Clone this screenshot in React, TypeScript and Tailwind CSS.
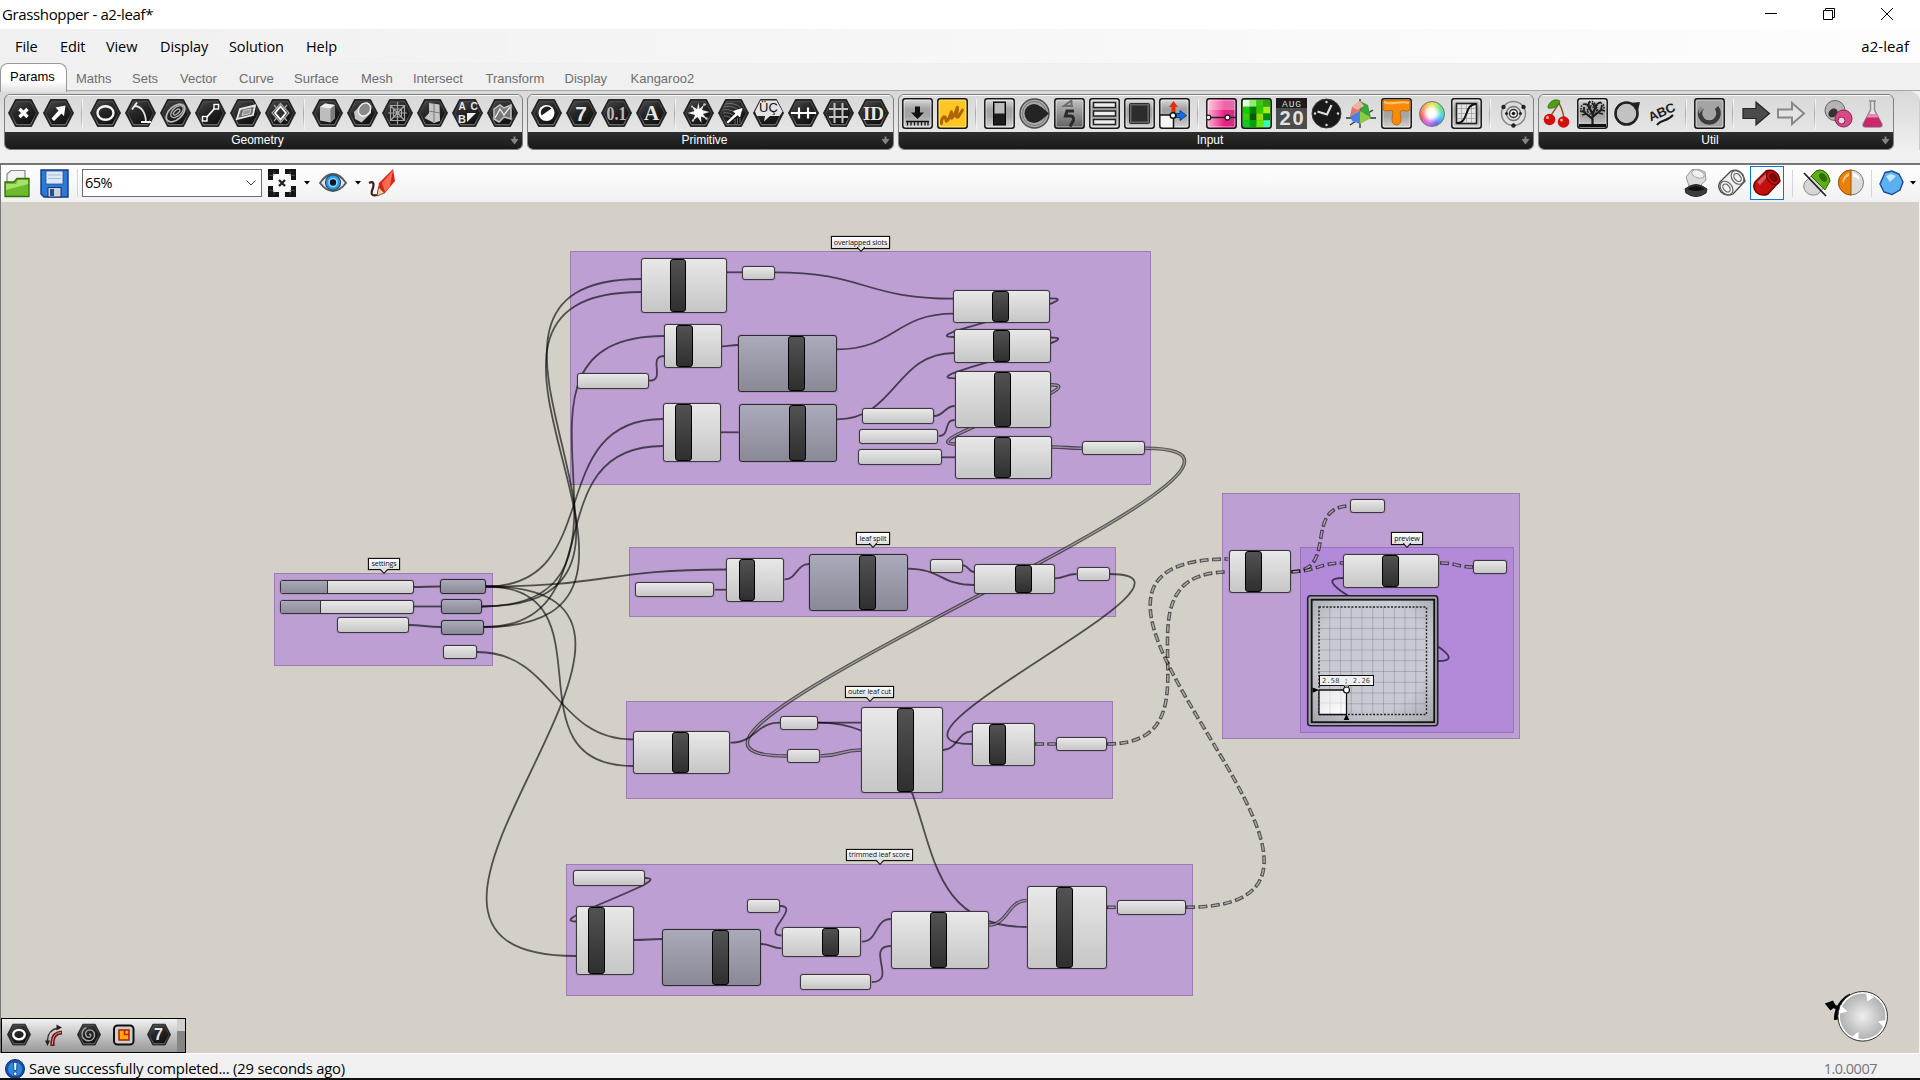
import React from "react";

/* ---------- shared icon frames ---------- */

function Hex({ children }: { children?: React.ReactNode }) {
  return (
    <svg viewBox="0 0 31 31" className="h-[31px] w-[31px] shrink-0">
      <polygon points="0.5,15 7.5,1.5 23.5,1.5 30.5,15 23.5,28.5 7.5,28.5" fill="#161616" stroke="#2c2c2c" strokeWidth="1" />
      <polygon points="2.5,15 8.5,3.2 22.5,3.2 28.5,15 22.5,26.8 8.5,26.8" fill="url(#hexFill)" stroke="url(#hexRim)" strokeWidth="1" />
      {children}
    </svg>
  );
}

function Tile({ fill = "url(#tileFill)", children }: { fill?: string; children?: React.ReactNode }) {
  return (
    <svg viewBox="0 0 31 31" className="h-[31px] w-[31px] shrink-0">
      <rect x="0.8" y="0.8" width="29.4" height="29.4" rx="2.5" fill={fill} stroke="#161616" strokeWidth="1.5" />
      <rect x="2.2" y="2.2" width="26.6" height="26.6" rx="1" fill="none" stroke="#fff" strokeOpacity="0.45" strokeWidth="1" />
      {children}
    </svg>
  );
}

function Bare({ children }: { children?: React.ReactNode }) {
  return (
    <svg viewBox="0 0 31 31" className="h-[31px] w-[31px] shrink-0">
      {children}
    </svg>
  );
}

function Glyph({ children, size = 20, serif = true, x = 15.5, y = 22 }: { children: string; size?: number; serif?: boolean; x?: number; y?: number }) {
  return (
    <text x={x} y={y} textAnchor="middle" fontSize={size} fontWeight="700" fill="#e6e6e6" fontFamily={serif ? '"Liberation Serif", serif' : '"Liberation Sans", sans-serif'}>
      {children}
    </text>
  );
}

const Sep = () => <div className="mt-px h-[30px] w-2 shrink-0 px-[3px]"><div className="h-full w-0.5 border-r border-white/70 bg-gradient-to-b from-transparent via-[#a8a8a8] to-transparent" /></div>;

function Defs() {
  return (
    <svg className="absolute h-0 w-0">
      <defs>
        <linearGradient id="hexFill" x1="0" y1="0" x2="0.6" y2="1">
          <stop offset="0" stopColor="#4c4c4c" /><stop offset="0.5" stopColor="#262626" /><stop offset="1" stopColor="#121212" />
        </linearGradient>
        <linearGradient id="hexRim" x1="0" y1="0" x2="0" y2="1">
          <stop offset="0" stopColor="#555" /><stop offset="0.6" stopColor="#444" /><stop offset="1" stopColor="#8a8a8a" />
        </linearGradient>
        <linearGradient id="tileFill" x1="0" y1="0" x2="0" y2="1">
          <stop offset="0" stopColor="#dedede" /><stop offset="0.35" stopColor="#a2a2a2" /><stop offset="0.6" stopColor="#a6a6a6" /><stop offset="1" stopColor="#d6d6d6" />
        </linearGradient>
        <linearGradient id="tilePink" x1="0" y1="0" x2="1" y2="0">
          <stop offset="0" stopColor="#f9b9d3" /><stop offset="0.6" stopColor="#ee1f83" /><stop offset="1" stopColor="#c8328a" />
        </linearGradient>
        <linearGradient id="tileDark" x1="0" y1="0" x2="0" y2="1">
          <stop offset="0" stopColor="#c4c4c4" /><stop offset="1" stopColor="#5e5e5e" />
        </linearGradient>
      </defs>
    </svg>
  );
}

/* ---------- ribbon icon sets ---------- */

function GeometryIcons() {
  return (
    <>
      <Hex><path d="M11.500 11l8 8M19.500 11l-8 8" stroke="#fff" strokeWidth="3.400" /></Hex>
      <Hex><path d="M8.500 20.500L11 23L18.500 15.500L21 18L22.500 7.500L12.500 9.500L15.500 12.500Z" fill="#fff" /></Hex>
      <Sep />
      <Hex><ellipse cx="15.500" cy="15" rx="8" ry="6.800" fill="none" stroke="#f4f4f4" strokeWidth="2.400" /></Hex>
      <Hex><path d="M9.500 8C16 8 20.500 14 21 24" fill="none" stroke="#e4e4e4" strokeWidth="1.800" /><path d="M12 4.500L7 11.500M16 24h10" stroke="#f4f4f4" strokeWidth="1.800" /></Hex>
      <Hex><g fill="none" stroke="#b8b8b8" transform="rotate(-42 15.500 15)"><ellipse cx="15.500" cy="15" rx="11" ry="6.500" strokeWidth="1.800" /><ellipse cx="17.500" cy="15" rx="7.500" ry="4.300" strokeWidth="1.300" /><ellipse cx="17" cy="15" rx="4" ry="1.800" strokeWidth="1.300" /></g></Hex>
      <Hex><path d="M11 20L20 10" stroke="#fff" strokeWidth="1.800" /><rect x="7.500" y="18.500" width="4.500" height="4.500" fill="#222" stroke="#fff" strokeWidth="1.400" /><rect x="19" y="6.500" width="4.500" height="4.500" fill="#222" stroke="#fff" strokeWidth="1.400" /></Hex>
      <Hex><path d="M7 21L10 11L25 7.500L23 17Z" fill="#6a6a6a" stroke="#e8e8e8" strokeWidth="1.800" /><path d="M12 17.500L13.500 12.500L21 11L20 15.500Z" fill="#9a9a9a" stroke="#ddd" strokeWidth="0.800" /></Hex>
      <Hex><path d="M15.500 5.500L24 15L15.500 24.500L7 15ZM9 7l13 16M22 7L9 23" fill="none" stroke="#a9a9a9" strokeWidth="1.200" /><path d="M15.500 8.500L21 15L15.500 21.500L10 15Z" fill="#333" stroke="#fff" strokeWidth="1.800" /></Hex>
      <Sep />
      <Hex><path d="M8 9L13 5.500L23 7V20L18.500 24.500L8 22.500Z" fill="#bdbdbd" /><path d="M8 9L13 5.500L23 7L18.500 10.500Z" fill="#eee" /><path d="M18.500 10.500L23 7V20L18.500 24.500Z" fill="#7d7d7d" /></Hex>
      <Hex><path d="M7 14L16 5L24 9V15L14.500 24.500L8 21Z" fill="#c4c4c4" /><ellipse cx="17.500" cy="11.500" rx="7" ry="5.600" transform="rotate(-50 17.500 11.500)" fill="#8a8a8a" stroke="#f2f2f2" strokeWidth="1.400" /></Hex>
      <Hex><path d="M8.500 7.500h14v15h-14zM15.500 4v22M6 15h19M8.500 7.500l14 15M22.500 7.500l-14 15M11.500 11h8v8h-8z" fill="none" stroke="#a5a5a5" strokeWidth="1.200" /></Hex>
      <Hex><path d="M12 5L22.500 6.500L23 23L17 25L7.500 20L12 15Z" fill="#c6c6c6" /><path d="M12 13l11 2M17 6v18" stroke="#666" strokeWidth="0.800" /></Hex>
      <Hex><Glyph size={10} serif={false} x={10} y={12}>A</Glyph><Glyph size={10} serif={false} x={22} y={12}>C</Glyph><Glyph size={11} serif={false} x={10} y={25}>B</Glyph><path d="M15 15h9l-9 9z" fill="#eee" /></Hex>
      <Hex><path d="M7 11L13 7L17 10L24 7V21L17 19L12 24L7 21Z" fill="#777" stroke="#c4c4c4" strokeWidth="1.500" /><path d="M8 20L13 11L17 17L23 9" fill="none" stroke="#eee" strokeWidth="1.300" /></Hex>
    </>
  );
}

function PrimitiveIcons() {
  return (
    <>
      <Hex><circle cx="15.500" cy="15" r="8" fill="#fff" /><path d="M20.500 10.500A6.200 6.200 0 0 0 10.500 17.500Z" fill="#1d1d1d" /></Hex>
      <Hex><Glyph size={21} serif={false} x={15} y={22.500}>7</Glyph></Hex>
      <Hex><text x="15.500" y="21.500" textAnchor="middle" fontSize="19" fontWeight="700" fill="#b8b8b8" fontFamily='"Liberation Serif", serif' textLength="20" lengthAdjust="spacingAndGlyphs">0.1</text></Hex>
      <Hex><Glyph size={21}>A</Glyph></Hex>
      <Sep />
      <Hex><path d="M15.500 4.500L16.500 11L21 6.500L19 12L26.500 14L20 16L24 21L18 18.500L18.500 25L14.500 19L9.500 23L12 17L4.500 15L11.500 13L8.500 8L14 11Z" fill="#eee" /><circle cx="15.500" cy="15" r="4.200" fill="#fff" /><g fill="#ccc"><circle cx="21.500" cy="6.500" r="1.300" /><circle cx="9" cy="8.500" r="1.100" /><circle cx="23.500" cy="20.500" r="1.200" /><circle cx="10" cy="22.500" r="1.200" /></g></Hex>
      <Hex><g fill="none" stroke="#777" strokeWidth="0.900"><path d="M7 6c9-2 15 2 18 7M5.500 9c8-2 13 1 16 5M5 12c7-1 11 1 13 4M5 15c5-1 9 1 11 3M6 18c4 0 6 1 8 3" /><path d="M17 26v-5M19.500 26v-6M22 25v-5" /></g><path d="M8.500 24L17.500 15.500L15 13L24.500 10L22 19.500L19.500 17.200L10 25.500Z" fill="#fff" /></Hex>
      <Hex><path d="M7.500 2.500h16l6 11-3 4.500H17l-6 5.500 1-5.500H4l-2-4.500z" fill="#e4e4e4" /><text x="15.500" y="13.500" textAnchor="middle" fontSize="13" fill="#111" fontFamily='"Liberation Sans", sans-serif'>ÜÇ</text></Hex>
      <Hex><path d="M3 15h25" stroke="#fff" strokeWidth="2" /><path d="M11 9.500v11M20 9.500v11" stroke="#fff" strokeWidth="2.200" /></Hex>
      <Hex><path d="M6 11h19M6 19h19M11.500 5v20M19.500 5v20" stroke="#c4c4c4" strokeWidth="2" /></Hex>
      <Hex><Glyph size={19} y={21.500}>ID</Glyph></Hex>
    </>
  );
}

const swatches = ["#e6ffe0", "#8fee72", "#3ec51a", "#2ea50c", "#0ad200", "#087a08", "#32c800", "#a5f018", "#3ccf05", "#005c00", "#8fe000", "#058a05", "#0ecb22", "#09a010", "#66e80e", "#38ffc0"];

function InputIcons() {
  return (
    <>
      <Tile><path d="M13 8.500h5v6h4l-6.500 6.500L9 14.500h4z" fill="#111" /><path d="M4 23.500h23M5.500 24v3.500M9 24v3.500M12.500 24v3.500M16 24v3.500M19.500 24v3.500M23 24v3.500M26 24v3.500" stroke="#111" strokeWidth="1.300" /></Tile>
      <Tile fill="#fcc623"><path d="M4.500 25.500C4 20 8 17 8.500 20S9 25.500 12 20S14 12 14.500 15S13 24 17 17S20 8 20.500 10S17.500 22 21.500 18.500L25.500 12" fill="none" stroke="#b06408" strokeWidth="3" strokeLinecap="round" /></Tile>
      <Sep />
      <Tile><rect x="9.500" y="4" width="12" height="23" fill="#1d1d1d" stroke="#000" /><rect x="10.500" y="5" width="10" height="10.500" fill="#bcbcbc" /></Tile>
      <Bare><circle cx="15.500" cy="15.500" r="14.500" fill="#aaa" stroke="#4b4b4b" strokeWidth="1.400" /><circle cx="15.500" cy="15.500" r="12" fill="none" stroke="#777" /><circle cx="15" cy="15.500" r="9.500" fill="#242424" /><path d="M22 8.500L30 15.500L22 22.500Z" fill="#242424" /></Bare>
      <Tile fill="url(#tileDark)"><path d="M18 2L10 8h9M17.500 2v7" fill="none" stroke="#6c6c6c" strokeWidth="2" /><path d="M20 13H13L11.500 18H16.500C20 18 20 22 18.500 24L16 28.500" fill="none" stroke="#2a2a2a" strokeWidth="3" /></Tile>
      <Tile><g fill="#eee" stroke="#222" strokeWidth="1.500"><rect x="4.500" y="4.500" width="22" height="5" /><rect x="4.500" y="13" width="22" height="5" /><rect x="4.500" y="21.500" width="22" height="5" /></g></Tile>
      <Tile><rect x="5.500" y="5.500" width="20" height="20" rx="1" fill="#666" stroke="#2a2a2a" /><rect x="7.500" y="7.500" width="16" height="16" fill="#2c2c2c" /></Tile>
      <Tile><rect x="2" y="17" width="12" height="12" fill="#f6f6f6" /><path d="M1 17h20M14.500 14v16" stroke="#111" strokeWidth="1.500" /><path d="M12.500 15V9H10L14.500 3L19 9H16.500V15Z" fill="#e03010" /><path d="M17 15.500h4v-3l6.500 5-6.500 5v-3h-4z" fill="#1270e0" stroke="#063a80" strokeWidth="0.900" /><circle cx="14" cy="17.500" r="2.800" fill="#fff" stroke="#111" strokeWidth="1.400" /></Tile>
      <Sep />
      <Tile fill="url(#tilePink)"><path d="M2 2h27v10H2z" fill="#fff" opacity="0.300" /><path d="M1 19.500h29" stroke="#222" strokeWidth="1.500" /><circle cx="21.500" cy="19.500" r="2.500" fill="#fff" stroke="#222" strokeWidth="1.300" /><circle cx="2.500" cy="19.500" r="2.300" fill="#fff" stroke="#222" strokeWidth="1.300" /></Tile>
      <Tile fill="#2a9a10">{swatches.map((c, i) => <rect key={i} x={2 + (i % 4) * 6.75} y={2 + Math.floor(i / 4) * 6.75} width="6.750" height="6.750" fill={c} />)}</Tile>
      <Bare><rect width="31" height="31" fill="#4c4c4c" /><rect width="31" height="10" fill="#1c1c1c" /><text x="15.500" y="9" textAnchor="middle" fontSize="9.500" fill="#ddd" textLength="19" fontFamily='"Liberation Mono", monospace'>AUG</text><text x="15.500" y="27" textAnchor="middle" fontSize="20" fontWeight="700" fill="#e2e2e2" textLength="24" fontFamily='"Liberation Sans", sans-serif'>20</text></Bare>
      <Bare><circle cx="15.500" cy="15.500" r="14.500" fill="#191919" stroke="#3c3c3c" /><path d="M6.500 13.500L16 16.500L20.500 7" fill="none" stroke="#ddd" strokeWidth="2.200" /><g fill="#ddd"><circle cx="15.500" cy="4" r="1.200" /><circle cx="15.500" cy="27" r="1.200" /><circle cx="4" cy="15.500" r="1.200" /><circle cx="27" cy="15.500" r="1.200" /></g></Bare>
      <Bare><path d="M0 20h30M14 1v29M4 27L27 12" stroke="#333" strokeWidth="1.400" /><path d="M6 9L14 3V13L4 18Z" fill="#e2766c" /><path d="M14 3L22 7L25 20L15 14Z" fill="#3aa53b" /><path d="M4 18L14 13V26L6 23Z" fill="#4b7fe0" /><path d="M14 13L25 20L14 26Z" fill="#8ccb3c" /><path d="M6 9L14 3L18 8L11 12Z" fill="#f2b29c" /></Bare>
      <Tile><path d="M2 2h27v10c-3 2-6 .5-7.500.5c-1 0-1.500.5-2 1c-.8 1 .5 5 .5 8c0 3-1.500 5.500-4.500 5.500s-4.500-2.500-4.500-5.500c0-3 1.500-7 .5-8.500c-1-1.500-6 1-9.500-1z" fill="#f88b0c" stroke="#b55d00" strokeWidth="0.800" /><path d="M3 4c8 4 16-2 25 1" stroke="#ffc46a" strokeWidth="2" fill="none" /></Tile>
      <div className="grid h-[31px] w-[31px] shrink-0 place-items-center"><div className="grid h-[26px] w-[26px] place-items-center rounded-full border border-gray-500 bg-[conic-gradient(#e8e840,#6fe070,#40d8e8,#5f6df0,#d95fe8,#f0505a,#f09a40,#e8e840)]"><div className="h-[15px] w-[15px] rounded-full bg-white blur-[2px]" /></div></div>
      <Tile><rect x="5.500" y="5.500" width="20" height="20" fill="#e4e4e4" stroke="#222" strokeWidth="1.600" /><path d="M10.500 6v19M15.500 6v19M20.500 6v19M6 10.500h19M6 15.500h19M6 20.500h19" stroke="#999" strokeWidth="0.700" /><path d="M6 25C18 25 13 6 25 6" fill="none" stroke="#111" strokeWidth="2" /></Tile>
      <Sep />
      <Bare><circle cx="15.500" cy="15.500" r="12" fill="none" stroke="#888" strokeWidth="1.600" /><circle cx="15.500" cy="15.500" r="7" fill="none" stroke="#777" strokeWidth="1.500" /><circle cx="15.500" cy="15.500" r="4" fill="#eee" stroke="#333" strokeWidth="1.500" /><g fill="#222"><circle cx="15.500" cy="15.500" r="1.800" /><circle cx="15.500" cy="27.500" r="2.200" /><circle cx="5.500" cy="9" r="2.200" /><circle cx="25.500" cy="9" r="2.200" /><circle cx="8.500" cy="15.500" r="1.500" /><circle cx="22.500" cy="15.500" r="1.500" /></g></Bare>
    </>
  );
}

function UtilIcons() {
  return (
    <>
      <Bare><path d="M17 5C14 11 10 14 8 20M17 5C20 11 22 17 22 22" fill="none" stroke="#8c5226" strokeWidth="1.500" /><path d="M6 8C9 1 15 1 18 3C16 9 11 11 6 10Z" fill="#4e9e16" stroke="#2c6a08" strokeWidth="0.700" /><circle cx="7.500" cy="21.500" r="5.800" fill="#d40d0d" /><circle cx="21.500" cy="24" r="5.800" fill="#d40d0d" /><circle cx="5.500" cy="19.500" r="1.500" fill="#ffa9a0" /><circle cx="19.500" cy="22" r="1.500" fill="#ffa9a0" /></Bare>
      <Tile><g fill="none" stroke="#1c1c1c"><path d="M15.500 28V15M15.500 21L7 14M15.500 19L24 12M15.500 16L11 7M15.500 16L20 6" strokeWidth="2.200" /><path d="M7 14l-4-1M7 14l0-5M11 7l-4-1M11 7l2-4M20 6l4-2M24 12l4 1M24 12l1-5M20 10l-5-5M5 17l4-1M26 16l-4-1" strokeWidth="1.800" /></g><g fill="none" stroke="#222" strokeWidth="1.500" strokeDasharray="1.500 1.200"><circle cx="8" cy="10" r="4" /><circle cx="15" cy="6.500" r="3" /><circle cx="23" cy="9" r="4" /><circle cx="15" cy="12" r="4.500" /></g><path d="M2 27.500h27" stroke="#111" strokeWidth="3" /></Tile>
      <Bare><circle cx="14.500" cy="15.500" r="11" fill="#c2c2c2" stroke="#222" strokeWidth="2.600" /><path d="M18 5L28 4L25.500 15Z" fill="#222" /><circle cx="14.500" cy="15.500" r="9.500" fill="#c2c2c2" /></Bare>
      <Bare><g transform="rotate(-24 15 16)"><text x="15.500" y="18.500" textAnchor="middle" fontSize="13" fontWeight="700" textLength="28" lengthAdjust="spacingAndGlyphs" fill="#1c1c1c" fontFamily='"Liberation Sans", sans-serif'>ABC</text></g><path d="M10 27C14 21 20 24 26 17" fill="none" stroke="#1c1c1c" strokeWidth="2" /></Bare>
      <Sep />
      <Tile fill="#a4a4a4"><path d="M8 9.500A9.300 9.300 0 1 0 22.500 9.500" fill="none" stroke="#3a3a3a" strokeWidth="4.500" /><path d="M3 3h13L5 16z" fill="#a4a4a4" opacity="0.800" /></Tile>
      <Sep />
      <Bare><path d="M2 10.500H15V4L28.500 15.500L15 27V20.500H2Z" fill="#4b4b4b" stroke="#222" strokeWidth="1.200" /></Bare>
      <Bare><path d="M2 11.500H16V5L28 15.500L16 26V19.500H2Z" fill="#e4e4e4" stroke="#888" strokeWidth="2" /></Bare>
      <Sep />
      <Bare><circle cx="12" cy="12.500" r="10" fill="#b4b4b4" stroke="#666" /><ellipse cx="10" cy="15" rx="5" ry="4" fill="#333" transform="rotate(-40 10 15)" /><circle cx="20.500" cy="20.500" r="8.500" fill="#d84a86" stroke="#8a1d4c" /><circle cx="18.500" cy="22.500" r="3.500" fill="#f6d4e2" stroke="#8a1d4c" /></Bare>
      <Bare><path d="M11 3h7M12.500 3v9L5 26.500Q5 29 8 29H21Q24 29 24 26.500L16.500 12V3" fill="#e8e0e4" stroke="#8f8f8f" strokeWidth="1.500" /><path d="M10 16.500h9L24 26.500Q24 29 21 29H8Q5 29 5 26.500Z" fill="#c9286c" /><path d="M10 16.500h9l1.500 3H8.500z" fill="#f088b4" /></Bare>
    </>
  );
}

function Panel({ title, width, children }: { title: string; width: string; children: React.ReactNode }) {
  return (
    <section className={`flex h-14 flex-col overflow-hidden rounded-md border border-[#808080] bg-gradient-to-b from-[#d8d8d8] to-[#ececec] ${width}`}>
      <div className="flex h-[37px] shrink-0 gap-1 border-t border-white/80 pl-[3px] pt-[2px]">{children}</div>
      <div className="relative flex-1 bg-gradient-to-b from-[#2f2f2f] to-[#191919] pr-[12px] text-center font-['Liberation_Sans',sans-serif] text-[12px] leading-4 text-white">
        {title}
        <svg viewBox="0 0 9 9" className="absolute right-[3px] top-1 h-[9px] w-[9px]"><path d="M3.500 0.500h2v2.500h3L4.500 8.500L0.500 3h3z" fill="#858585" /></svg>
      </div>
    </section>
  );
}

/* ---------- graph data ---------- */

type Kind = "light" | "dark";
type NodeSpec = [number, number, number, number, Kind, number?, number?];

const groups: [number, number, number, number, boolean][] = [
  [570, 251, 1151.5, 485, false],
  [274, 573, 493.5, 665.5, false],
  [629.5, 547, 1116.5, 617, false],
  [626.5, 701, 1113.5, 799, false],
  [566.5, 864, 1193, 996, false],
  [1222.400, 493, 1520.5, 739, false],
  [1300.400, 547, 1514, 733, true],
];

const nodes: NodeSpec[] = [
  [641.400, 258, 728, 313, "light", 670, 686],
  [742, 265.5, 775.5, 279.5, "light"],
  [664.400, 324, 722.5, 368, "light", 676, 693],
  [738, 335, 837, 392, "dark", 788, 805],
  [577, 373, 649, 388.5, "light"],
  [663, 403, 721, 462, "light", 675, 692],
  [738.5, 404, 837.5, 461.5, "dark", 789, 806],
  [953.400, 289.5, 1051, 323, "light", 992, 1009],
  [953.900, 329, 1051.5, 362.5, "light", 993, 1010],
  [954.900, 370.5, 1052, 428, "light", 994, 1011],
  [955.400, 436, 1052.5, 478.5, "light", 994, 1011],
  [862, 408, 934, 424, "light"],
  [859.400, 429, 939, 444, "light"],
  [858.400, 449, 943, 465, "light"],
  [1082, 441, 1145.5, 455, "light"],
  [336.500, 617, 409, 632.5, "light"],
  [439.800, 579, 487, 593.5, "dark"],
  [441.400, 599, 482.5, 613.5, "dark"],
  [441.400, 620, 484.5, 634.5, "dark"],
  [443.400, 645, 478, 659, "light"],
  [726, 558, 784.5, 602, "light", 738.5, 755],
  [635.400, 582, 715, 597, "light"],
  [809, 554, 908, 611, "dark", 859, 876],
  [929.5, 558.5, 963.5, 572.5, "light"],
  [974, 563.5, 1055, 593.5, "light", 1015, 1032],
  [1076.5, 567, 1110.5, 581, "light"],
  [633, 731, 730.5, 774, "light", 672, 688.5],
  [780, 715.5, 818.500, 730, "light"],
  [786.8, 749, 820.500, 763, "light"],
  [861, 707, 943, 793, "light", 897, 914],
  [972, 723, 1035, 766, "light", 989, 1006],
  [1055.8, 737, 1107.5, 751, "light"],
  [573, 870, 645, 886, "light"],
  [576, 905.5, 634.5, 975, "light", 588, 605],
  [662.4, 929, 761.5, 986, "dark", 712, 729.5],
  [746.8, 899, 780.5, 913, "light"],
  [781.6, 927, 862, 957, "light", 822.5, 839.5],
  [800.200, 974, 872, 989.5, "light"],
  [891, 910.5, 989, 968.5, "light", 930, 947],
  [1026.6, 886, 1107.5, 968.5, "light", 1056, 1073],
  [1117.300, 900, 1186.5, 914.5, "light"],
  [1228.6, 550, 1291.5, 593, "light", 1245, 1262.5],
  [1350.400, 499, 1386, 513, "light"],
  [1343.400, 554, 1440, 587.5, "light", 1382, 1399],
  [1473.400, 560, 1508, 574, "light"],
];

const labels: [string, number, number, number, number, number][] = [
  ["overlapped slots", 831, 236, 890, 248.5, 861],
  ["settings", 368, 558, 400, 570, 383.5],
  ["leaf split", 856, 532, 890, 544.5, 872.5],
  ["outer leaf cut", 845, 686, 894, 698, 870],
  ["trimmed leaf score", 846, 849, 912.5, 861, 879.5],
  ["preview", 1391, 532, 1423, 544.5, 1407],
];

type WireKind = "single" | "double" | "dashed";
const wires: [number, number, number, number, WireKind?][] = [
  [482, 606.5, 641, 279], [484, 627, 641, 292], [482, 606.5, 664, 336],
  [486, 586.5, 663, 419], [484, 627, 663, 446], [486, 586.5, 726, 569.5],
  [486, 586.5, 633, 766], [486, 586.5, 576, 956], [477, 652, 633, 739.5],
  [413, 587, 440, 586.5], [413, 606.5, 441, 606.5], [408, 625, 441, 627],
  [727, 272.3, 742, 272.3], [775, 272.3, 953.5, 298.7], [722, 346.3, 738, 345],
  [836.7, 349.3, 953.5, 313.7], [649, 380.7, 664.5, 356], [720.8, 432.3, 738.8, 432.3],
  [837, 419.3, 954, 353], [934, 416, 954.7, 406], [938.8, 436, 954.7, 420], [942, 457.3, 955, 457.3],
  [1050, 298.3, 954.500, 337], [1050.500, 337.5, 955.2, 378.3], [1051, 384.7, 955.500, 444, "double"],
  [1052, 447, 1082, 448.3, "double"], [1145, 448.3, 786.8, 756, "double"],
  [784.5, 579.3, 809, 564], [714.8, 589.7, 726, 589.7], [907.7, 568.7, 974, 585], [963, 565.3, 974, 572],
  [1054.6, 578.3, 1076.5, 574], [1110, 574, 972, 744],
  [730.5, 742.7, 780, 722.7], [818, 722.7, 861, 722.7], [818, 722.7, 1026.6, 927],
  [820.5, 756, 861, 750, "double"], [943, 750, 972, 731.3], [1035, 744, 1055.8, 744, "dashed"],
  [1107, 744, 1228.3, 572, "dashed"], [1186, 907.3, 1228.3, 559, "dashed"],
  [645, 878, 576, 921.5], [634, 940, 662, 939], [761, 944, 781.6, 948.3], [780, 906, 781.6, 935.5],
  [861.8, 941.7, 890.8, 919], [871.8, 982, 890.8, 946], [988.8, 925, 1026.6, 900.5, "double"],
  [1107, 907.3, 1117, 907.3, "dashed"], [1291.3, 571.7, 1350, 506, "dashed"], [1291.3, 571.7, 1343, 563, "dashed"],
  [1440, 563, 1473.3, 567, "dashed"], [1438, 661, 1343, 578],
];

const curve = (x1: number, y1: number, x2: number, y2: number) => {
  const d = Math.max(Math.abs(x2 - x1) * 0.5, Math.abs(y2 - y1) * 0.725);
  return `M${x1} ${y1}C${x1 + d} ${y1} ${x2 - d} ${y2} ${x2} ${y2}`;
};

const TOP = 202;

function Wires() {
  return (
    <svg viewBox={`0 ${TOP} 1920 851`} className="absolute left-0 top-0 h-[851px] w-[1920px]" fill="none">
      {wires.map(([a, b, c, d, kind], i) => {
        const path = curve(a, b, c, d);
        if (kind === "double")
          return <g key={i}><path d={path} stroke="#000" strokeOpacity="0.600" strokeWidth="3.600" /><path d={path} stroke="#fff" strokeOpacity="0.420" strokeWidth="1.400" /></g>;
        if (kind === "dashed")
          return <g key={i}><path d={path} stroke="#000" strokeOpacity="0.600" strokeWidth="3.600" strokeDasharray="9 3.400" /><path d={path} stroke="#fff" strokeOpacity="0.500" strokeWidth="1.500" strokeDasharray="6.400 6" strokeDashoffset="-1.300" /></g>;
        return <path key={i} d={path} stroke="#000" strokeOpacity="0.620" strokeWidth="1.800" />;
      })}
    </svg>
  );
}

function GraphNode({ spec }: { spec: NodeSpec }) {
  const [x1, y1, x2, y2, kind, b1, b2] = spec;
  const tone = kind === "dark" ? "from-[#abaabb] to-[#8a8996] border-[#2b2b2f]" : "from-[#e8e8e8] to-[#c6c6c6] border-[#3a383c]";
  return (
    <div className={`absolute rounded-[3px] border-[1.5px] bg-gradient-to-b shadow-[0_0_1px_rgba(0,0,0,0.8)] ${tone}`} style={{ left: x1, top: y1 - TOP, width: x2 - x1 - 0.5, height: y2 - y1 }}>
      {b1 !== undefined && b2 !== undefined && (
        <div className="absolute inset-y-0 rounded-[3px] border border-black bg-gradient-to-b from-[#525252] to-[#2f2f2f]" style={{ left: b1 - x1 - 1, width: b2 - b1 }} />
      )}
    </div>
  );
}

function Slider({ x, y, fill }: { x: number; y: number; fill: number }) {
  return (
    <div className="absolute flex h-[14px] w-[134px] overflow-hidden rounded-[3px] border-[1.5px] border-[#333] bg-gradient-to-b from-[#e8e8e8] to-[#cdcdcd] shadow-[0_0_1px_rgba(0,0,0,0.8)]" style={{ left: x, top: y - TOP }}>
      <div className="border-r border-[#333] bg-gradient-to-b from-[#a9a8b8] to-[#8d8c9a]" style={{ width: fill }} />
    </div>
  );
}

function Tag({ text, x1, y1, x2, y2, tip }: { text: string; x1: number; y1: number; x2: number; y2: number; tip: number }) {
  const w = x2 - x1;
  return (
    <div className="absolute border border-[#111] bg-gradient-to-b from-white to-[#dedede] shadow-[0_0_1px_#333]" style={{ left: x1, top: y1 - TOP, width: w, height: y2 - y1 }}>
      <svg viewBox="0 0 8 5" className="absolute top-[10px] h-[5px] w-2" style={{ left: tip - x1 - 5 }}><path d="M0 0L4 4.300L8 0" fill="#e2e2e2" stroke="#222" strokeWidth="1.200" /></svg>
      <div className="relative flex h-full items-center justify-center whitespace-nowrap font-['Open_Sans',sans-serif] text-[7.2px] leading-none tracking-[-0.12px] text-[#111]">{text}</div>
    </div>
  );
}

function DialPad() {
  return (
    <svg viewBox="1306 594 134 134" className="absolute left-[1306px] top-[392px] h-[134px] w-[134px]">
      <defs>
        <radialGradient id="padGlow" cx="0.5" cy="0.45" r="0.75"><stop offset="0.6" stopColor="#c9c9d1" /><stop offset="1" stopColor="#a3a3ad" /></radialGradient>
        <linearGradient id="padBox" x1="0" y1="0" x2="1" y2="1"><stop offset="0" stopColor="#e4e4ea" /><stop offset="1" stopColor="#fff" /></linearGradient>
      </defs>
      <rect x="1307.700" y="595.700" width="130" height="130" rx="3" fill="#a0a0ad" stroke="#222" strokeWidth="1.600" />
      <rect x="1311.700" y="599.700" width="122.500" height="122.500" fill="url(#padGlow)" stroke="#111" strokeWidth="1.800" />
      {Array.from({ length: 9 }, (_, i) => (
        <path key={i} d={`M${1319 + (i + 1) * 10.75} 607V714M1319 ${607 + (i + 1) * 10.75}H1426`} stroke="#6c6c76" strokeOpacity="0.350" strokeWidth="1" />
      ))}
      <rect x="1319" y="607" width="107.500" height="107.500" fill="none" stroke="#222" strokeWidth="1.400" strokeDasharray="2 1.600" />
      <rect x="1319" y="690" width="27.500" height="24.500" fill="url(#padBox)" />
      <path d="M1330 690v24M1341 690v24M1319 703h27" stroke="#d4d4d8" strokeWidth="0.700" />
      <path d="M1319 690H1346.500V714.500M1319 690V714.500H1346.500" fill="none" stroke="#111" strokeWidth="1.300" />
      <path d="M1312.500 687.500L1319 690L1312.500 692.700ZM1343.700 720L1346.500 714L1349.300 720Z" fill="#000" />
      <rect x="1319.500" y="675.500" width="54" height="10" fill="#f0f0f0" stroke="#111" />
      <path d="M1343.500 685.500L1346.500 688.500L1349.500 685.500" fill="#f0f0f0" stroke="#111" />
      <circle cx="1346.500" cy="690" r="3" fill="#fff" stroke="#111" strokeWidth="1.200" />
      <text x="1322" y="682.700" fontSize="7" textLength="48" fill="#444" fontFamily='"DejaVu Sans Mono", monospace' xmlSpace="preserve">2.58 ; 2.26</text>
    </svg>
  );
}

function Compass() {
  return (
    <svg viewBox="1820 985 75 62" className="absolute left-[1820px] top-[783px] h-[62px] w-[75px]">
      <defs><radialGradient id="ball"><stop offset="0" stopColor="#efefef" /><stop offset="1" stopColor="#b2b2b2" /></radialGradient></defs>
      <path d="M1850 993.500A28 28 0 0 0 1834 1020L1838.500 1019.500A26 26 0 0 1 1850 998Z" fill="#000" />
      <path d="M1824.800 1003.500L1833 1000.500L1836 1006L1830.500 1010.500Z" fill="#000" />
      <path d="M1833 1006l5 2" stroke="#000" strokeWidth="4" />
      <circle cx="1862.700" cy="1016.300" r="24.800" fill="#fff" stroke="#333" strokeWidth="1" />
      <circle cx="1862.700" cy="1016.300" r="22.800" fill="url(#ball)" />
      <path d="M1866 993l1.500 8.500 6.500-4.500zM1840.500 1005l7 6.500-7.500 2zM1885.500 1020l-7.500 1.500 6 6zM1852 1037l6.500-5.500 0 8z" fill="#fff" />
    </svg>
  );
}

function CornerWidget() {
  return (
    <div className="absolute left-[1px] top-[816px] flex h-[35px] w-[185px] border border-black bg-gradient-to-b from-[#f2f2f2] to-[#989898]">
      <div className="flex flex-1 items-center gap-[11px] pb-[2px] pl-[5px] [&>svg]:h-6 [&>svg]:w-6 [&>svg]:shrink-0">
        <Hex><ellipse cx="15.500" cy="15" rx="7.500" ry="6.200" fill="none" stroke="#fff" strokeWidth="3" /></Hex>
        <svg viewBox="0 0 24 24"><path d="M5.500 19V17Q6 7 16 5" fill="none" stroke="#333" strokeWidth="1.400" /><path d="M3 17.500h5l-2.500 5.500zM14.500 1.500v6l5.500-3z" fill="#222" /><path d="M10.500 23V19Q11 10 20 9.500" fill="none" stroke="#7d1414" strokeWidth="4.200" /><path d="M10.500 21.500V19Q11 10 19 9.500" fill="none" stroke="#c9a0a0" strokeWidth="1" /></svg>
        <Hex><path d="M15.500 15q2-2 2.500 1q-1 4-5 2q-4-4 0-8q6-3 9 2q2 7-3 10q-8 3-12-4q-2-9 5-12" fill="none" stroke="#aaa" strokeWidth="1.700" /></Hex>
        <svg viewBox="0 0 24 24"><rect x="2" y="2.500" width="19.500" height="19" rx="3.500" fill="#cfcfcf" stroke="#111" strokeWidth="2" /><rect x="7" y="7" width="10" height="10" fill="#ffac08" stroke="#b62607" strokeWidth="1.600" /><path d="M12.500 7v4.500H17" fill="none" stroke="#b62607" strokeWidth="1.600" /></svg>
        <Hex><Glyph size={21} serif={false} x={15} y={22.500}>7</Glyph></Hex>
      </div>
      <div className="w-2 bg-gradient-to-b from-[#cfcfcf] from-35% to-[#858585] to-35%" />
    </div>
  );
}

/* ---------- chrome ---------- */

const menu: [string, string][] = [["File", "w-[45px]"], ["Edit", "w-[46px]"], ["View", "w-[54px]"], ["Display", "w-[69px]"], ["Solution", "w-[77px]"], ["Help", "w-[60px]"]];
const tabs: [string, string][] = [["Maths", "w-14"], ["Sets", "w-12"], ["Vector", "w-[59px]"], ["Curve", "w-[55px]"], ["Surface", "w-[67px]"], ["Mesh", "w-[52px]"], ["Intersect", "w-[72.500px]"], ["Transform", "w-[79px]"], ["Display", "w-[66px]"], ["Kangaroo2", "w-[80px]"]];

const Caret = () => <svg viewBox="0 0 6 4" className="h-1 w-[6px]"><path d="M0 0h6L3 3.500z" fill="#000" /></svg>;

function Cylinder({ body, rim, core }: { body: string; rim: string; core: string }) {
  return (
    <svg viewBox="0 0 30 30" className="h-[30px] w-[30px] shrink-0">
      <path d="M3 14L14 3Q21 0 26 7L28 13L16 26Q9 29 4 24Q0 19 3 14Z" fill={body} stroke={rim} strokeWidth="1.400" />
      <path d="M5 14L15 4.500L18 6L8 17Z" fill="#fff" opacity="0.300" />
      <ellipse cx="21" cy="9.500" rx="7.800" ry="5.600" transform="rotate(50 21 9.500)" fill={body} stroke={rim} strokeWidth="1.200" />
      <ellipse cx="21.500" cy="9.500" rx="4.300" ry="2.800" transform="rotate(50 21.500 9.500)" fill={core} stroke={rim} strokeWidth="1" />
    </svg>
  );
}

function CanvasToolbar() {
  return (
    <div className="flex h-[39px] items-center justify-between border-l border-t-2 border-[#777] bg-gradient-to-b from-white to-[#f1f1f1] pb-[2px]">
      <div className="flex items-center pl-[3px] pt-px">
        <svg viewBox="0 0 26 29" className="h-[29px] w-[26px]"><path d="M3 13V5L7 1.500H21V13" fill="#f3f3f3" stroke="#888" strokeWidth="1.200" /><path d="M1 13H10L13 9.500H25V27.500H1Z" fill="#6dbb2c" stroke="#2d6f0d" strokeWidth="1.300" /><path d="M2 15H12L14 11H24V15L2 21Z" fill="#a8e06a" /></svg>
        <svg viewBox="0 0 29 29" className="ml-[10px] h-[29px] w-[29px]"><path d="M1 1H28V28H4L1 25Z" fill="#2f78d8" stroke="#123a80" strokeWidth="1.400" /><rect x="6" y="2" width="17" height="13" fill="#dde9f6" stroke="#1f4f9c" strokeWidth="0.800" /><path d="M8 6h13M8 9.500h13" stroke="#a9b9cc" /><rect x="8" y="18.500" width="13" height="9.500" fill="#c9d4df" stroke="#16336a" /><rect x="10" y="20" width="4" height="7" fill="#234c96" /></svg>
        <div className="ml-2 mr-1 h-7 w-px bg-gray-300" />
        <div className="flex h-7 w-[180px] items-center justify-between border border-[#6e6e6e] bg-white pl-[2px] pr-[5px] font-['Open_Sans',sans-serif] text-[14.5px] tracking-[-0.6px] text-black">
          65%
          <svg viewBox="0 0 10 6" className="h-[6px] w-[10px]"><path d="M0.500 0.500L5 5L9.500 0.500" fill="none" stroke="#444" /></svg>
        </div>
        <svg viewBox="0 0 28 28" className="ml-[6px] h-7 w-7"><path d="M2.500 11V2.500H11M17 2.500H25.500V11M25.500 17V25.500H17M11 25.500H2.500V17" fill="none" stroke="#151515" strokeWidth="5" /><path d="M11 11l6 6M17 11l-6 6" stroke="#222" strokeWidth="2.400" /><path d="M1 6.500h5V2M22 2v4.500h5M27 21.500h-5V26M6 26v-4.500H1" fill="none" stroke="#777" strokeWidth="0.500" /></svg>
        <div className="ml-2"><Caret /></div>
        <svg viewBox="0 0 28 22" className="ml-[9px] h-[22px] w-7"><path d="M1 11Q7 2 14 2T27 11Q21 19 14 19T1 11Z" fill="#e6e6e6" stroke="#555" strokeWidth="1.800" /><circle cx="14" cy="10.500" r="7.500" fill="#2f9ce0" stroke="#164f80" strokeWidth="1.200" /><circle cx="14" cy="10.500" r="4.800" fill="#8fd4fa" /><circle cx="14" cy="10.500" r="3.200" fill="#0c1a28" /></svg>
        <div className="ml-2"><Caret /></div>
        <svg viewBox="0 0 28 30" className="ml-[7px] h-[30px] w-7"><path d="M1 15Q7 12 5 20Q1 29 9 27" fill="none" stroke="#40201a" strokeWidth="2.200" /><path d="M9 27L11 15L25 1L27 13L17 25Z" fill="#d82418" /><path d="M14 15L25 2L22 18L17 24Z" fill="#ff6a50" /><path d="M9 28L10.500 19L16.500 25Z" fill="#f3cf9e" stroke="#6d3b20" strokeWidth="0.800" /></svg>
      </div>
      <div className="flex items-center pr-1 pt-px">
        <svg viewBox="0 0 24 30" className="h-[30px] w-6"><path d="M2 9L8 1.500Q15 0 21 4L22 12L16 18H5Z" fill="#dcdcdc" stroke="#999" /><ellipse cx="14" cy="6" rx="6.500" ry="3.800" fill="#f0f0f0" stroke="#aaa" transform="rotate(20 14 6)" /><path d="M1 21Q12 12 23 21L22 25Q12 32 2 25Z" fill="#3c3c3c" stroke="#222" /><path d="M3 21Q12 15 21 21Q12 25 3 21Z" fill="#111" /></svg>
        <svg viewBox="0 0 30 30" className="ml-[9px] h-[30px] w-[30px]"><path d="M3 14L14 3Q21 0 26 7L28 13L16 26Q9 29 4 24Q0 19 3 14Z" fill="#f2f2f2" stroke="#444" strokeWidth="1.300" /><g fill="none" stroke="#666" strokeWidth="1.200"><ellipse cx="20.500" cy="9.500" rx="7.500" ry="5.500" transform="rotate(50 20.500 9.500)" /><ellipse cx="20.500" cy="9.500" rx="4.500" ry="3" transform="rotate(50 20.500 9.500)" /><ellipse cx="9.500" cy="20" rx="7.500" ry="5.500" transform="rotate(50 9.500 20)" /><ellipse cx="9.500" cy="20" rx="4.500" ry="3" transform="rotate(50 9.500 20)" /></g></svg>
        <div className="ml-[3px] grid h-[34px] w-[34px] place-items-center border border-[#0078d7] bg-[#fbfbfb]"><Cylinder body="#c01010" rim="#6d0000" core="#7d0505" /></div>
        <div className="ml-2 mr-[9px] h-[27px] w-px bg-gray-300" />
        <svg viewBox="0 0 30 30" className="h-[30px] w-[30px]"><path d="M3 14L14 3Q21 0 26 7L28 13L16 26Q9 29 4 24Q0 19 3 14Z" fill="#d6d6d6" stroke="#888" /><path d="M9 8L14 3Q21 0 26 7L28 13L23 22Z" fill="#5fae14" stroke="#2c6503" /><ellipse cx="21" cy="9.500" rx="5" ry="3.300" transform="rotate(50 21 9.500)" fill="#2f6e05" /><path d="M2 5L24 28" stroke="#222" strokeWidth="1.800" /></svg>
        <svg viewBox="0 0 28 28" className="ml-[5px] h-7 w-7"><circle cx="14" cy="13.500" r="12.500" fill="#dcdcdc" stroke="#777" /><path d="M14 1A12.500 12.500 0 0 0 14 26Z" fill="#e8800c" stroke="#a65300" /><path d="M12 4A9 9 0 0 0 6 15Q8 8 12 7Z" fill="#ffc77d" /><path d="M16 4A9 9 0 0 1 23 11Q19 8 16 8Z" fill="#fff" /></svg>
        <div className="ml-[6px] mr-[6px] h-[27px] w-px bg-gray-300" />
        <svg viewBox="0 0 26 26" className="h-[26px] w-[26px]"><path d="M7 2.500L14 1L21 4L25 12L22 20L14 24.500L6 22L2 14Z" fill="#5cb0ef" stroke="#174a9c" strokeWidth="1.400" /><path d="M8 6L13 4L18 6L12 12Z" fill="#c6e8ff" /></svg>
        <div className="ml-[6px]"><Caret /></div>
      </div>
    </div>
  );
}

export default function App() {
  return (
    <main className="flex h-[1080px] w-[1920px] flex-col overflow-hidden bg-[#f0f0f0] font-['Open_Sans',sans-serif] text-black">
      <Defs />
      <header className="flex h-[29px] shrink-0 items-center justify-between bg-white pb-px pl-[2px] pr-[27px]">
        <span className="text-[15px] leading-5 tracking-[-0.36px]">Grasshopper - a2-leaf*</span>
        <div className="flex items-center gap-[46px]">
          <svg viewBox="0 0 12 12" className="h-3 w-3"><path d="M0 5.500h12" stroke="#000" /></svg>
          <svg viewBox="0 0 12 12" className="h-3 w-3"><path d="M0.500 2.500h9v9h-9zM2.500 2.500v-2h9v9h-2" fill="none" stroke="#000" /></svg>
          <svg viewBox="0 0 12 12" className="h-3 w-3"><path d="M0 0l12 12M12 0L0 12" stroke="#000" /></svg>
        </div>
      </header>
      <nav className="flex h-[34px] shrink-0 items-center justify-between bg-gradient-to-r from-[#f0f0f0] to-[#fdfdfd] pl-[15px] pr-[11px] pt-px text-[14.5px] tracking-[-0.1px]">
        <div className="flex">{menu.map(([m, w]) => <span key={m} className={w}>{m}</span>)}</div>
        <span className="text-[15px] tracking-[0.05px]">a2-leaf</span>
      </nav>

      <div className="flex h-[28px] shrink-0 font-['Liberation_Sans',sans-serif] text-[13px] text-[#6e6e6e]">
        <div className="z-10 -mb-px h-[29px] w-[67px] rounded-t-lg border border-b-0 border-[#999] bg-gradient-to-b from-white from-60% to-[#e2e2e2] pl-[9px] pt-[3px] text-black">Params</div>
        <div className="flex flex-1 border-b border-[#a6a6a6] pl-[9px] pt-[6px]">
          {tabs.map(([t, w]) => <span key={t} className={w}>{t}</span>)}
        </div>
      </div>
      <div className="flex h-[59px] shrink-0 gap-1 rounded-tr-xl border-r border-[#ccc] bg-gradient-to-b from-[#d8d8d8] to-[#f0f0f0] pl-1 pt-[3px]">
        <Panel title="Geometry" width="w-[519px]"><GeometryIcons /></Panel>
        <Panel title="Primitive" width="w-[367px]"><PrimitiveIcons /></Panel>
        <Panel title="Input" width="w-[636px]"><InputIcons /></Panel>
        <Panel title="Util" width="w-[356px]"><UtilIcons /></Panel>
      </div>
      <div className="h-[13px] shrink-0" />

      <CanvasToolbar />

      <div className="relative h-[851px] shrink-0 overflow-hidden border-x border-l-[#777] border-r-[#f4f4f4] bg-[#d4d0c8]">
        <div className="absolute -left-px top-0 h-full w-[1920px]">
          {groups.map(([x1, y1, x2, y2, inner], i) => (
            <div key={i} className={`absolute border border-[#6b4f80]/40 ${inner ? "bg-[#b389da]" : "bg-[#bd9fd3]"}`} style={{ left: x1 - 0.4, top: y1 - TOP, width: x2 - x1, height: y2 - y1 }} />
          ))}
          <Wires />
          {nodes.map((n, i) => <GraphNode key={i} spec={n} />)}
          <Slider x={280} y={580} fill={47} />
          <Slider x={280} y={599.5} fill={40} />
          {labels.map(([text, x1, y1, x2, y2, tip]) => <Tag key={text} text={text} x1={x1} y1={y1} x2={x2} y2={y2} tip={tip} />)}
          <DialPad />
          <Compass />
          <CornerWidget />
        </div>
      </div>

      <footer className="flex h-[25px] shrink-0 items-center justify-between border-t border-white pl-[5px] pr-[43px] pt-[5px] text-[14.5px]">
        <div className="flex items-center gap-1">
          <svg viewBox="0 0 20 20" className="h-5 w-5"><circle cx="10" cy="10" r="9.500" fill="#1a4fae" stroke="#0e2f70" /><circle cx="10" cy="10" r="7" fill="#2f87d8" /><path d="M8.500 3.500h3.500l-.5 8H9z" fill="#dff" stroke="#123a7a" strokeWidth="0.800" /><circle cx="10.200" cy="14.700" r="1.800" fill="#dff" stroke="#123a7a" strokeWidth="0.800" /></svg>
          <span className="text-[14.8px] tracking-[-0.2px]">Save successfully completed... (29 seconds ago)</span>
        </div>
        <span className="tracking-[-0.5px] text-[#777]">1.0.0007</span>
      </footer>
      <div className="h-0.5 shrink-0 bg-[#111]" />
    </main>
  );
}
